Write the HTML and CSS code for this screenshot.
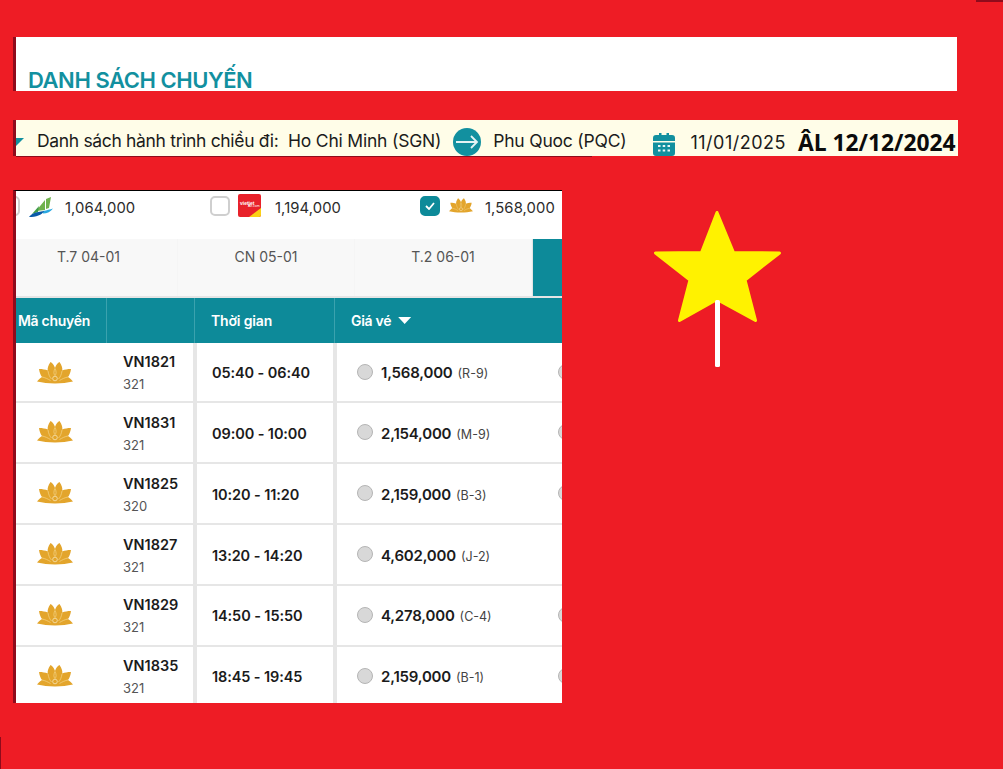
FILE: index.html
```html
<!DOCTYPE html>
<html lang="vi">
<head>
<meta charset="utf-8">
<title>Danh sách chuyến</title>
<link rel="stylesheet" href="styles.css">
</head>
<body>
<svg width="0" height="0" class="defs">
  <symbol id="lotus" viewBox="0 0 36 22">
    <path fill="#e3a52c" d="M18 6C19 2.500 21 1 22.500 0 25 3.500 25.500 6 25.300 8.500 27.500 7.500 30.500 7 34 7 33.500 10.500 32.500 13 31 15 33 16 34.500 18 36 19.500 30 20.500 25 21.500 18 21.500 11 21.500 6 20.500 0 19.500 1.500 18 3 16 5 15 3.500 13 2.500 10.500 2 7 5.500 7 8.500 7.500 10.700 8.500 10.500 6 11 3.500 13.500 0 15 1 17 2.500 18 6z"/>
    <path fill="none" stroke="#f3d48a" stroke-width=".7" d="M18 6.500c1.500 3 1.500 5.500 0 7M18 6.500c-1.500 3-1.500 5.500 0 7M11 9c.5 3 1.500 6 3.500 8M25 9c-.5 3-1.500 6-3.500 8M5 15c3 .5 6 2 8.500 3.500M31 15c-3 .5-6 2-8.500 3.500"/>
    <circle cx="18" cy="16.500" r="2.300" fill="none" stroke="#f6e3b4" stroke-width=".8"/>
  </symbol>
</svg>

<section class="title-panel">
  <h1 class="title">DANH SÁCH CHUYẾN</h1>
</section>

<section class="route-panel">
  <span class="route-caret"></span>
  <span class="route-label">Danh sách hành trình chiều đi:</span>
  <span class="route-city">Ho Chi Minh (SGN)</span>
  <svg class="route-arrow" viewBox="0 0 28 28" width="28" height="28">
    <circle cx="14" cy="14" r="14" fill="#12909f"/>
    <path d="M3 14h21M18 8l6 6-6 6" fill="none" stroke="#e4f3f4" stroke-width="1.800"/>
  </svg>
  <span class="route-city route-dest">Phu Quoc (PQC)</span>
  <svg class="route-cal" viewBox="0 0 22 24" width="22" height="24">
    <path fill="#12909f" d="M3 3h3V1h2.500v2h5V1H16v2h3a3 3 0 0 1 3 3v3H0V6a3 3 0 0 1 3-3zM0 10.500h22V21a3 3 0 0 1-3 3H3a3 3 0 0 1-3-3z"/>
    <g fill="#e8f5f6"><rect x="5" y="13" width="2.500" height="2"/><rect x="9.700" y="13" width="2.500" height="2"/><rect x="14.500" y="13" width="2.500" height="2"/><rect x="5" y="17.500" width="2.500" height="2"/><rect x="9.700" y="17.500" width="2.500" height="2"/><rect x="14.500" y="17.500" width="2.500" height="2"/></g>
  </svg>
  <span class="route-date">11/01/2025</span>
  <span class="route-lunar">ÂL 12/12/2024</span>
</section>

<section class="card">
  <div class="airlines">
    <div class="airline airline-bamboo">
      <span class="check check-clipped"></span>
      <svg class="logo-bamboo" viewBox="0 0 24 20" width="24" height="20">
        <path fill="#6fb24d" d="M7 14 16 3v10zM17 2l5-2-2 11-3 1z"/>
        <path fill="#3f9c49" d="M3 17 10 9l-1 6z"/>
        <path fill="#29a8e0" d="M14 14c4-.8 7-1.500 10-2.500-2 3-6 5-10 5z"/>
        <path fill="#0a5aa8" d="M0 20c2-3 6-5 15-6-2 4-8 6-15 6z"/>
      </svg>
      <span class="fare-low">1,064,000</span>
    </div>
    <div class="airline airline-vietjet">
      <span class="check"></span>
      <svg class="logo-vietjet" viewBox="0 0 23 23" width="23" height="23">
        <rect width="23" height="23" rx="2" fill="#e8222b"/>
        <path d="M23 14v7a2 2 0 0 1-2 2H11z" fill="#fbd116"/>
        <text x="2" y="11" class="logo-vj-a">vietjet</text>
        <text x="10" y="13" class="logo-vj-b">Air.com</text>
      </svg>
      <span class="fare-low">1,194,000</span>
    </div>
    <div class="airline airline-vna">
      <span class="check check-on">
        <svg viewBox="0 0 10 8" width="10" height="8"><path d="M1 4l3 3 5-6" fill="none" stroke="#fff" stroke-width="1.800"/></svg>
      </span>
      <svg class="logo-lotus-small" width="24" height="15"><use href="#lotus"/></svg>
      <span class="fare-low">1,568,000</span>
    </div>
  </div>

  <div class="days">
    <div class="day day-1">T.7 04-01</div>
    <div class="day day-2">CN 05-01</div>
    <div class="day day-3">T.2 06-01</div>
    <div class="day day-active"></div>
  </div>

  <div class="thead">
    <div class="th th-code">Mã chuyến</div>
    <div class="th th-plane"></div>
    <div class="th th-time">Thời gian</div>
    <div class="th th-price">Giá vé <span class="sort"></span></div>
  </div>

  <div class="row row-first">
    <div class="c-logo"><svg width="36" height="22"><use href="#lotus"/></svg></div>
    <div class="c-flight"><b>VN1821</b><small>321</small></div>
    <div class="c-time">05:40 - 06:40</div>
    <div class="c-price"><span class="radio"></span><b>1,568,000</b><small>(R-9)</small><span class="radio radio-next"></span></div>
  </div>
  <div class="row">
    <div class="c-logo"><svg width="36" height="22"><use href="#lotus"/></svg></div>
    <div class="c-flight"><b>VN1831</b><small>321</small></div>
    <div class="c-time">09:00 - 10:00</div>
    <div class="c-price"><span class="radio"></span><b>2,154,000</b><small>(M-9)</small><span class="radio radio-next"></span></div>
  </div>
  <div class="row">
    <div class="c-logo"><svg width="36" height="22"><use href="#lotus"/></svg></div>
    <div class="c-flight"><b>VN1825</b><small>320</small></div>
    <div class="c-time">10:20 - 11:20</div>
    <div class="c-price"><span class="radio"></span><b>2,159,000</b><small>(B-3)</small><span class="radio radio-next"></span></div>
  </div>
  <div class="row">
    <div class="c-logo"><svg width="36" height="22"><use href="#lotus"/></svg></div>
    <div class="c-flight"><b>VN1827</b><small>321</small></div>
    <div class="c-time">13:20 - 14:20</div>
    <div class="c-price"><span class="radio"></span><b>4,602,000</b><small>(J-2)</small></div>
  </div>
  <div class="row row-late">
    <div class="c-logo"><svg width="36" height="22"><use href="#lotus"/></svg></div>
    <div class="c-flight"><b>VN1829</b><small>321</small></div>
    <div class="c-time">14:50 - 15:50</div>
    <div class="c-price"><span class="radio"></span><b>4,278,000</b><small>(C-4)</small><span class="radio radio-next"></span></div>
  </div>
  <div class="row row-late row-last">
    <div class="c-logo"><svg width="36" height="22"><use href="#lotus"/></svg></div>
    <div class="c-flight"><b>VN1835</b><small>321</small></div>
    <div class="c-time">18:45 - 19:45</div>
    <div class="c-price"><span class="radio"></span><b>2,159,000</b><small>(B-1)</small><span class="radio radio-next"></span></div>
  </div>
</section>

<svg class="star" viewBox="0 0 130 160" width="130" height="160">
  <polygon points="65,3.500 81.500,43.500 127.500,44 93,71 103.500,111.500 65,90.500 27.500,111.500 38,71 3.500,44 49.500,43.500" fill="#fff200" stroke="#fff200" stroke-width="3" stroke-linejoin="round"/>
  <rect x="63" y="91" width="5" height="67" rx="1.500" fill="#fff"/>
</svg>

<span class="corner-top"></span>
<span class="corner-bottom"></span>
</body>
</html>
```

FILE: styles.css
```css
* { box-sizing: border-box; }
html, body { margin: 0; height: 769px; overflow: hidden; }
body {
  position: relative;
  background: #ee1c25;
  padding: 37px 0 0 13px;
  font-family: Inter, "Liberation Sans", sans-serif;
  color: #1b1b1b;
}
.defs { position: absolute; }

.title-panel {
  width: 944px;
  height: 54px;
  background: #fff;
  border-left: 3px solid #8f0b1c;
  padding: 30px 0 0 12px;
}
.title {
  margin: 0;
  font-size: 22px;
  line-height: 24px;
  padding-top: 1px;
  height: 24px;
  font-weight: 600;
  letter-spacing: -0.45px;
  color: #12909f;
}

.route-panel {
  width: 945px;
  height: 36px;
  margin-top: 29px;
  background: #fffde8;
  border-left: 3px solid #8f0b1c;
  display: flex;
  align-items: flex-end;
  position: relative;
  font-size: 17.500px;
  line-height: 30px;
  white-space: nowrap;
}
.route-panel::after {
  content: "";
  position: absolute;
  left: 0;
  bottom: -1px;
  width: 576px;
  height: 1px;
  background: #8f0b1c;
}
.route-caret {
  width: 8px;
  height: 8px;
  background: #12909f;
  clip-path: polygon(0 0, 100% 0, 0 100%);
  margin: 0 13px 10px 0;
}
.route-label { width: 251px; letter-spacing: -0.33px; }
.route-city { letter-spacing: -0.2px; }
.route-arrow { margin-left: 12px; }
.route-dest { margin-left: 12px; }
.route-cal { margin-left: 27px; }
.route-date { margin-left: 15px; font-size: 18px; line-height: 26px; letter-spacing: 0.5px; }
.route-lunar {
  margin-left: 12px;
  font-family: "Open Sans", sans-serif;
  font-weight: 700;
  font-size: 22.800px;
  line-height: 26px;
  color: #0b0b0b;
}

.card {
  width: 549px;
  height: 513px;
  margin-top: 34px;
  background: #fff;
  border-left: 3px solid #8f0b1c;
  border-top: 1px solid #000;
  overflow: hidden;
}
.airlines { height: 48px; display: flex; }
.airline { display: flex; align-items: flex-start; padding-top: 5px; height: 48px; font-size: 14.800px; }
.airline-bamboo { width: 194px; }
.airline-vietjet { width: 210px; }
.airline-vna { flex: 1; }
.check {
  width: 20px;
  height: 20px;
  border: 2px solid #cfcfcf;
  border-radius: 5px;
  background: #fff;
  flex: none;
  display: flex;
  align-items: center;
  justify-content: center;
}
.check-clipped { margin-left: -16px; }
.check-on { background: #0d8a99; border-color: #0d8a99; }
.logo-bamboo { margin: 1px 0 0 9px; }
.logo-vietjet { margin: -2px 0 0 8px; }
.logo-vj-a { font: 700 5px "Liberation Sans", sans-serif; fill: #fff; }
.logo-vj-b { font: 400 3.500px "Liberation Sans", sans-serif; fill: #fff; }
.logo-lotus-small { margin: 2px 0 0 9px; }
.fare-low { color: #2b2b2b; letter-spacing: 0.1px; line-height: 24px; }
.airline-bamboo .fare-low { margin-left: 12px; }
.airline-vietjet .fare-low { margin-left: 14px; }
.airline-vna .fare-low { margin-left: 12px; }

.days {
  height: 57px;
  display: flex;
  background: #f8f8f8;
  color: #555;
  font-size: 14px;
}
.day { padding-top: 9px; line-height: 17px; text-align: center; border-right: 1px solid #f5f5f5; }
.day-1 { width: 162px; padding-left: 28px; padding-right: 44px; }
.day-2 { width: 177px; }
.day-3 { width: 177px; }
.day-active { flex: 1; background: #0d8a99; border-left: 1px solid #e4e4e4; border-right: 0; }

.thead {
  height: 47px;
  border-top: 2px solid #e5e5e5;
  background: #0d8a99;
  display: flex;
  color: #fff;
  font-size: 14px;
  font-weight: 600;
  letter-spacing: -0.3px;
}
.th { display: flex; align-items: center; border-right: 1px solid #3aa2ae; }
.th-code { width: 91px; padding-left: 2px; padding-bottom: 1px; }
.th-plane { width: 88px; }
.th-time { width: 140px; padding-left: 16px; letter-spacing: -0.15px; }
.th-price { flex: 1; padding-left: 16px; border-right: 0; gap: 7px; }
.sort {
  width: 13px;
  height: 7px;
  background: #fff;
  clip-path: polygon(0 0, 100% 0, 50% 100%);
}

.row {
  height: 61px;
  display: flex;
  border-bottom: 2px solid #e6e6e6;
}
.row-first { height: 60px; }
.row-last { border-bottom: 0; }
.c-logo { width: 91px; padding: 18px 0 0 21px; }
.row-first .c-logo { padding-top: 19px; }
.c-logo svg { display: block; }
.c-flight {
  width: 90px;
  padding: 10px 0 0 16px;
  display: flex;
  flex-direction: column;
  border-right: 4px solid #e6e6e6;
}
.row-first .c-flight, .row-late .c-flight { padding-top: 9px; }
.c-flight b { font-size: 14.500px; font-weight: 600; line-height: 20px; }
.c-flight small { font-size: 13px; line-height: 20px; margin-top: 2px; color: #555; }
.c-time {
  width: 140px;
  border-right: 4px solid #e6e6e6;
  padding: 21px 0 0 15px;
  font-size: 14.500px;
  font-weight: 600;
  line-height: 20px;
  letter-spacing: -0.1px;
}
.row-first .c-time, .row-late .c-time { padding-top: 20px; }
.c-price {
  flex: 1;
  display: flex;
  align-items: baseline;
  padding: 21px 0 0 20px;
  position: relative;
  line-height: 20px;
  overflow: hidden;
}
.row-first .c-price, .row-late .c-price { padding-top: 20px; }
.c-price b { font-size: 15px; font-weight: 600; margin-left: 24px; letter-spacing: -0.2px; }
.c-price small { font-size: 12.500px; margin-left: 5px; color: #444; }
.radio {
  position: absolute;
  left: 20px;
  top: 21px;
  width: 16px;
  height: 16px;
  border-radius: 50%;
  background: #d8d8d8;
  border: 1px solid #b5b5b5;
}
.radio-next { left: 221px; }

.star { position: absolute; left: 652px; top: 209px; }
.corner-top { position: absolute; right: 0; top: 0; width: 27px; height: 2px; background: #8f0b1c; }
.corner-bottom { position: absolute; left: 0; top: 737px; width: 1px; height: 32px; background: #8f0b1c; }
```
